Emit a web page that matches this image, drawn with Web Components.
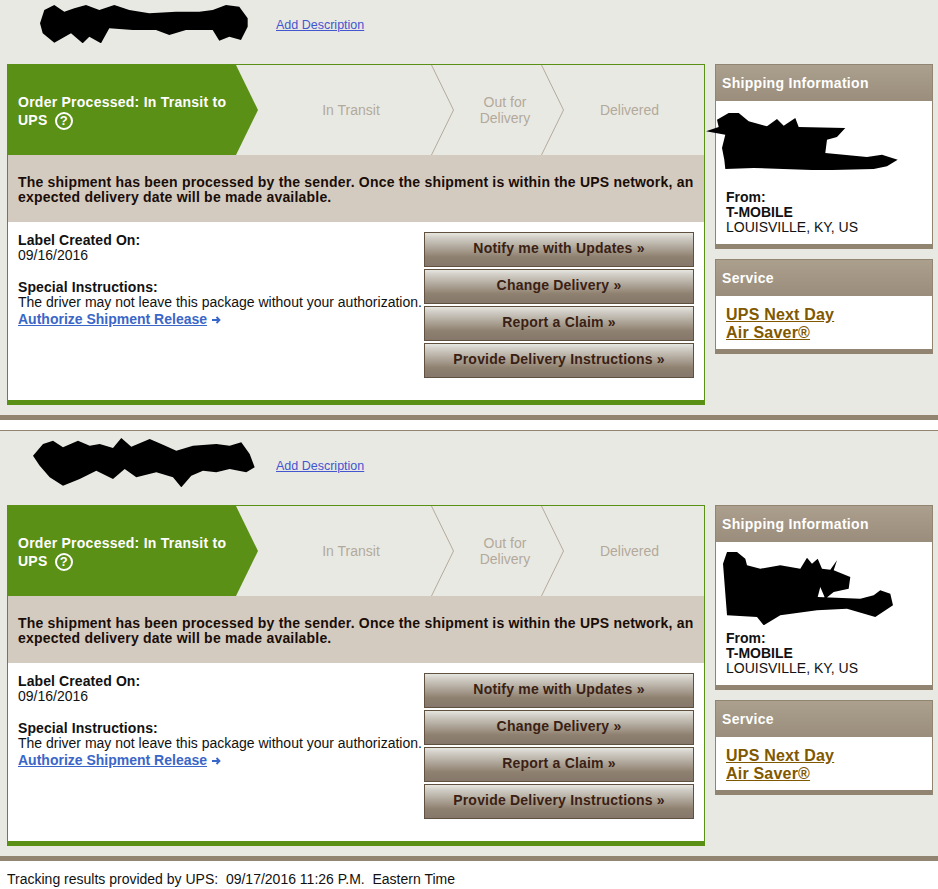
<!DOCTYPE html>
<html lang="en">
<head>
<meta charset="utf-8">
<title>Tracking results</title>
<style>
  html, body { margin: 0; padding: 0; background: #fff; }
  body { font-family: "Liberation Sans", Arial, sans-serif; font-size: 14px; color: #111; }
</style>
</head>
<body>
<tracking-section cropped>
  <redact-mark slot="title" shape="a" left="40" top="5"></redact-mark>
  <info-panel slot="side" heading="Shipping Information">
    <redact-mark shape="c" left="-10" top="12"></redact-mark>
    <ship-from></ship-from>
  </info-panel>
  <info-panel slot="side" heading="Service"><service-link></service-link></info-panel>
</tracking-section>
<tracking-section>
  <redact-mark slot="title" shape="b" left="33" top="7"></redact-mark>
  <info-panel slot="side" heading="Shipping Information">
    <redact-mark shape="d" left="7" top="10"></redact-mark>
    <ship-from></ship-from>
  </info-panel>
  <info-panel slot="side" heading="Service"><service-link></service-link></info-panel>
</tracking-section>
<page-footer>Tracking results provided by UPS:&nbsp; 09/17/2016 11:26 P.M.&nbsp; Eastern Time</page-footer>

<script>
// marker scribbles over the private bits, points are in zoomed (3x) crop coords
const SCRIBBLES = {
  a: [122,70,135,30,165,15,195,35,225,25,260,15,300,30,345,15,390,30,450,40,530,35,600,35,640,30,680,15,720,20,745,55,745,80,725,120,690,110,660,122,640,90,560,90,510,105,470,90,400,90,330,85,305,130,270,110,250,130,215,100,165,128,130,100],
  b: [100,695,130,660,160,650,190,670,235,650,270,665,300,660,340,672,365,642,395,668,450,645,490,662,530,680,580,665,650,660,690,665,725,655,750,690,765,730,740,745,690,735,650,745,610,740,575,755,545,790,520,760,470,745,410,760,375,735,340,765,290,740,240,765,190,785,150,760,120,725],
  c: [857,245,895,232,890,210,925,190,955,190,985,215,1040,230,1070,208,1090,228,1125,205,1135,232,1275,235,1250,262,1220,270,1215,310,1340,322,1385,315,1432,330,1400,350,1360,358,1200,362,1000,355,915,358,912,330,905,295,915,255],
  d: [68,190,80,155,110,155,135,175,140,195,180,205,240,195,300,205,320,172,335,190,352,175,365,205,390,208,410,180,400,210,450,230,445,265,400,275,375,295,360,260,352,290,480,295,520,285,540,270,570,280,578,315,525,350,440,325,350,330,240,345,190,375,170,350,80,345]
};

class RedactMark extends HTMLElement {
  connectedCallback() {
    const raw = SCRIBBLES[this.getAttribute('shape')];
    const xs = raw.filter((v, i) => i % 2 === 0).map(v => v / 3);
    const ys = raw.filter((v, i) => i % 2 === 1).map(v => v / 3);
    const x0 = Math.min(...xs), y0 = Math.min(...ys);
    const w = Math.max(...xs) - x0, h = Math.max(...ys) - y0;
    const pts = xs.map((x, i) => `${(x - x0).toFixed(1)},${(ys[i] - y0).toFixed(1)}`).join(' ');
    const root = this.attachShadow({ mode: 'open' });
    root.innerHTML = `
      <style>
        :host { position: absolute; left: ${this.getAttribute('left')}px; top: ${this.getAttribute('top')}px; display: block; line-height: 0; }
      </style>
      <svg width="${w}" height="${h}" viewBox="0 0 ${w} ${h}"><polygon points="${pts}" fill="#000"/></svg>`;
  }
}
customElements.define('redact-mark', RedactMark);

class UpsButton extends HTMLElement {
  constructor() {
    super();
    this.attachShadow({ mode: 'open' }).innerHTML = `
      <style>
        :host { display: block; }
        a {
          display: flex; align-items: center; justify-content: center;
          box-sizing: border-box; height: 35px; padding-bottom: 3px;
          border: 1px solid #5f5040;
          background: linear-gradient(#e6e6e0 0, #d4d1ca 12%, #8f8170 72%, #85776a 100%);
          color: #3b1f14; font-size: 14px; font-weight: bold; letter-spacing: .2px;
          text-decoration: none;
        }
      </style>
      <a href="#"><slot></slot> &raquo;</a>`;
  }
}
customElements.define('ups-button', UpsButton);

class ProgressSteps extends HTMLElement {
  constructor() {
    super();
    this.attachShadow({ mode: 'open' }).innerHTML = `
      <style>
        :host { display: flex; position: relative; height: 90px; background: #e9e9e4; }
        .step {
          box-sizing: border-box; display: flex; align-items: center; justify-content: center;
          text-align: center; color: #b3a99b; font-size: 14px; line-height: 16px;
        }
        .current {
          width: 250px; justify-content: flex-start; padding: 0 30px 0 10px; text-align: left;
          background: #5a9016; color: #fff; font-weight: bold; line-height: 18px; letter-spacing: .25px;
          clip-path: polygon(0 0, 228px 0, 250px 50%, 228px 100%, 0 100%);
        }
        .current div { padding-top: 1px; }
        .help {
          display: inline-block; box-sizing: border-box; width: 18px; height: 18px; margin: 0 0 -3px 3px;
          border: 2px solid #fff; border-radius: 50%;
          font-size: 13px; line-height: 14px; text-align: center; letter-spacing: 0;
        }
        .s2 { width: 195px; padding-right: 9px; }
        .s3 { width: 110px; padding-right: 6px; }
        .s4 { width: 141px; padding-right: 8px; }
        svg { position: absolute; left: 0; top: 0; }
      </style>
      <div class="step current"><div>Order Processed: In Transit to UPS <span class="help">?</span></div></div>
      <div class="step s2">In Transit</div>
      <div class="step s3">Out for<br>Delivery</div>
      <div class="step s4">Delivered</div>
      <svg width="696" height="90" fill="none" stroke="#b5aa9b">
        <path d="M423.5 0 445.5 45 423.5 90M533.5 0 555.5 45 533.5 90"/>
      </svg>`;
  }
}
customElements.define('progress-steps', ProgressSteps);

class TrackingCard extends HTMLElement {
  constructor() {
    super();
    this.attachShadow({ mode: 'open' }).innerHTML = `
      <style>
        :host { display: block; box-sizing: border-box; width: 698px; height: 341px; border: 1px solid #5a9016; border-bottom-width: 5px; background: #fff; }
        .msg {
          box-sizing: border-box; height: 67px; padding: 20px 10px 0;
          background: #d3cbbf; color: #1a0d08; font-size: 14px; font-weight: bold; line-height: 15px; letter-spacing: .2px;
        }
        .body { display: flex; justify-content: space-between; padding: 10px 10px 0; }
        .left { padding-top: 1px; font-size: 14px; line-height: 15px; }
        .left p { margin: 0 0 17px; }
        b { letter-spacing: .1px; }
        .auth { display: inline-block; margin-top: 2px; color: #3a66c8; font-weight: bold; }
        .auth svg { margin-left: 1px; }
        .actions { display: grid; gap: 2px; width: 270px; }
      </style>
      <progress-steps></progress-steps>
      <div class="msg">The shipment has been processed by the sender. Once the shipment is within the UPS network, an expected delivery date will be made available.</div>
      <div class="body">
        <div class="left">
          <p><b>Label Created On:</b><br>09/16/2016</p>
          <p><b>Special Instructions:</b><br>The driver may not leave this package without your authorization.<br>
          <span class="auth"><u>Authorize Shipment Release</u> <svg width="9" height="8" viewBox="0 0 9 8" fill="none" stroke="#3a66c8" stroke-width="1.8"><path d="M0 4h7.5M4.5 1l3 3-3 3"/></svg></span></p>
        </div>
        <div class="actions">
          <ups-button>Notify me with Updates</ups-button>
          <ups-button>Change Delivery</ups-button>
          <ups-button>Report a Claim</ups-button>
          <ups-button>Provide Delivery Instructions</ups-button>
        </div>
      </div>`;
  }
}
customElements.define('tracking-card', TrackingCard);

class InfoPanel extends HTMLElement {
  constructor() {
    super();
    const root = this.attachShadow({ mode: 'open' });
    root.innerHTML = `
      <style>
        :host { display: block; box-sizing: border-box; border: 1px solid #918571; border-bottom-width: 5px; background: #fff; }
        h3 {
          box-sizing: border-box; height: 36px; margin: 0; padding: 10px 6px 0;
          background: linear-gradient(#ab9f8e, #9a8d7b);
          color: #fff; font-size: 14px; line-height: 16px; letter-spacing: .3px;
        }
        .content { position: relative; }
      </style>
      <h3></h3>
      <div class="content"><slot></slot></div>`;
    this._heading = root.querySelector('h3');
  }
  connectedCallback() {
    this._heading.textContent = this.getAttribute('heading');
  }
}
customElements.define('info-panel', InfoPanel);

class ShipFrom extends HTMLElement {
  constructor() {
    super();
    this.attachShadow({ mode: 'open' }).innerHTML = `
      <style>
        :host { display: block; height: 143px; box-sizing: border-box; padding: 89px 10px 0; font-size: 14px; line-height: 15px; }
      </style>
      <b>From:</b><br><b>T-MOBILE</b><br>LOUISVILLE, KY, US`;
  }
}
customElements.define('ship-from', ShipFrom);

class ServiceLink extends HTMLElement {
  constructor() {
    super();
    this.attachShadow({ mode: 'open' }).innerHTML = `
      <style>
        :host { display: block; height: 53px; box-sizing: border-box; padding: 10px 10px 0; line-height: 18px; }
        a { color: #7f5800; font-size: 16px; font-weight: bold; letter-spacing: .2px; }
      </style>
      <a href="#">UPS Next Day<br>Air Saver&reg;</a>`;
  }
}
customElements.define('service-link', ServiceLink);

class TrackingSection extends HTMLElement {
  constructor() {
    super();
    this.attachShadow({ mode: 'open' }).innerHTML = `
      <style>
        :host {
          display: block; background: #e9e9e4; border-bottom: 5px solid #918571;
          padding: 0 5px 10px 7px; position: relative;
        }
        :host(:not([cropped])) { margin-top: 10px; border-top: 1px solid #918571; }
        .head {
          box-sizing: border-box; height: 74px; padding: 0 0 31px 269px;
          display: flex; align-items: flex-end; margin-left: -7px; padding-left: 276px;
        }
        :host([cropped]) .head { height: 64px; }
        .head a { color: #4455d0; font-size: 12.5px; line-height: 16px; }
        .row { display: flex; justify-content: space-between; }
        .side { width: 218px; display: flex; flex-direction: column; gap: 10px; }
      </style>
      <div class="head"><slot name="title"></slot><a href="#">Add Description</a></div>
      <div class="row">
        <tracking-card></tracking-card>
        <div class="side"><slot name="side"></slot></div>
      </div>`;
  }
}
customElements.define('tracking-section', TrackingSection);

class PageFooter extends HTMLElement {
  constructor() {
    super();
    this.attachShadow({ mode: 'open' }).innerHTML = `
      <style>
        :host { display: block; height: 28px; box-sizing: border-box; padding: 11px 0 0 7px; font-size: 14px; line-height: 15px; color: #111; }
      </style>
      <slot></slot>`;
  }
}
customElements.define('page-footer', PageFooter);
</script>
</body>
</html>
